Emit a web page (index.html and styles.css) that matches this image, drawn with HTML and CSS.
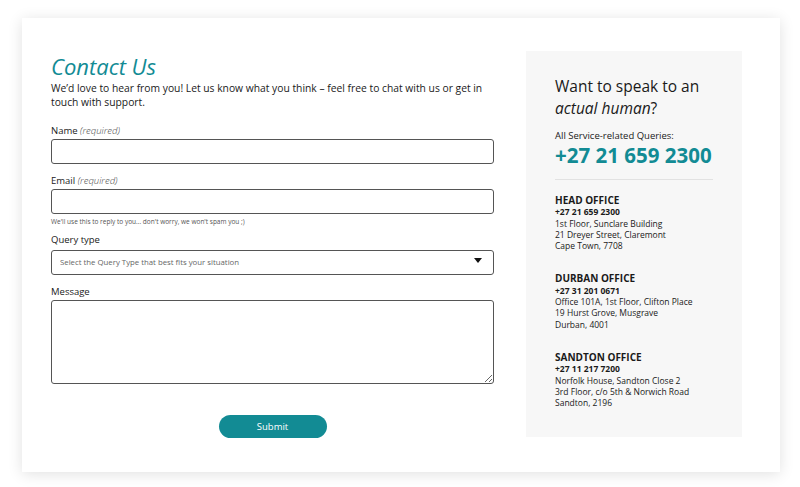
FILE: index.html
```html
<!DOCTYPE html>
<html lang="en">
<head>
  <meta charset="UTF-8" />
  <meta name="viewport" content="width=device-width, initial-scale=1.0"/>
  <title>Contact Us</title>
  <link rel="stylesheet" href="styles.css">
</head>
<body>
  <div class="card">
    <!-- Contact form -->
    <form class="contact-form" id="contactForm">
      <h1>Contact Us</h1>
      <p class="intro">We’d love to hear from you! Let us know what you think – feel free to chat with us or get in touch with support.</p>

      <label class="field">
        <span class="label">Name <em>(required)</em></span>
        <input type="text" required>
      </label>

      <label class="field">
        <span class="label">Email <em>(required)</em></span>
        <input type="email" required>
        <small>We'll use this to reply to you... don't worry, we won't spam you ;)</small>
      </label>

      <label class="field">
        <span class="label">Query type</span>
        <span class="select">
          <select>
            <option value="">Select the Query Type that best fits your situation</option>
            <option value="general">General</option>
            <option value="support">Support</option>
          </select>
          <svg class="caret" width="8" height="5" viewBox="0 0 8 5"><path d="M0 0h8L4 5z" fill="#111"/></svg>
        </span>
      </label>

      <label class="field">
        <span class="label">Message</span>
        <textarea rows="5"></textarea>
      </label>

      <div class="actions">
        <button type="submit">Submit</button>
      </div>
    </form>

    <!-- Offices -->
    <aside class="offices">
      <h2>Want to speak to an <em>actual human</em>?</h2>
      <p class="queries">All Service-related Queries:</p>
      <p class="main-phone">+27 21 659 2300</p>

      <div class="office">
        <h3>HEAD OFFICE</h3>
        <strong>+27 21 659 2300</strong>
        <p>1st Floor, Sunclare Building<br>21 Dreyer Street, Claremont<br>Cape Town, 7708</p>
      </div>

      <div class="office">
        <h3>DURBAN OFFICE</h3>
        <strong>+27 31 201 0671</strong>
        <p>Office 101A, 1st Floor, Clifton Place<br>19 Hurst Grove, Musgrave<br>Durban, 4001</p>
      </div>

      <div class="office">
        <h3>SANDTON OFFICE</h3>
        <strong>+27 11 217 7200</strong>
        <p>Norfolk House, Sandton Close 2<br>3rd Floor, c/o 5th &amp; Norwich Road<br>Sandton, 2196</p>
      </div>
    </aside>
  </div>

  <script>
    document.getElementById("contactForm").addEventListener("submit", function (e) {
      e.preventDefault();
    });
  </script>
</body>
</html>
```

FILE: styles.css
```css
:root {
  --primary-color: #128b94;
  --text-color: #1a1a1a;
  --muted-color: #666;
  --panel-bg: #f7f7f7;
  --font-sans: 'Open Sans', 'Noto Sans', Arial, sans-serif;
}

body {
  font-family: var(--font-sans);
  color: var(--text-color);
  background-color: #fff;
  margin: 0;
  padding: 18px 20px 15px 22px;
}

.card {
  width: 758px;
  height: 454px;
  box-sizing: border-box;
  padding: 34px 38px 35px 29px;
  background-color: #fff;
  box-shadow: 0 2px 14px rgba(0, 0, 0, 0.12);
  display: grid;
  grid-template-columns: 443px 216px;
  align-items: start;
  gap: 32px;
}

/* Form */

.contact-form {
  display: flex;
  flex-direction: column;
}

h1 {
  color: var(--primary-color);
  font-style: italic;
  font-weight: 400;
  font-size: 22px;
  line-height: 29px;
  margin: 0;
}

.intro {
  font-size: 10.3px;
  line-height: 14px;
  margin: 0 0 15px;
}

.field {
  display: flex;
  flex-direction: column;
  margin-bottom: 10px;
}

.label {
  font-size: 9.5px;
  line-height: 14px;
  margin-bottom: 1px;
}

.label em {
  font-weight: 300;
  color: #444;
}

input, select, textarea {
  font-family: var(--font-sans);
  box-sizing: border-box;
  border: 1px solid #555;
  border-radius: 3px;
  background-color: #fff;
  width: 100%;
  margin: 0;
}

input {
  height: 25px;
}

small {
  font-size: 6.5px;
  color: #555;
  line-height: 9px;
  margin-top: 3px;
  margin-bottom: -3px;
}

.select {
  position: relative;
  display: block;
}

select {
  appearance: none;
  height: 25px;
  padding: 0 8px;
  font-size: 7.8px;
  color: #666;
}

.caret {
  position: absolute;
  right: 12px;
  top: 10px;
}

textarea {
  height: 84px;
  resize: vertical;
}

.actions {
  display: flex;
  justify-content: center;
  margin-top: 21px;
}

button {
  font-family: var(--font-sans);
  background-color: var(--primary-color);
  color: #fff;
  font-size: 9.5px;
  width: 108px;
  height: 23px;
  border: none;
  border-radius: 12px;
  cursor: pointer;
}

/* Offices panel */

.offices {
  background-color: var(--panel-bg);
  padding: 24px 29px 22px;
  margin-top: -1px;
  height: 386px;
  box-sizing: border-box;
}

h2 {
  font-size: 15.5px;
  font-weight: 400;
  line-height: 22px;
  margin: 0 0 10px;
}

.queries {
  font-size: 9.5px;
  line-height: 13px;
  margin: 0;
}

.main-phone {
  color: var(--primary-color);
  font-size: 20.5px;
  font-weight: 700;
  line-height: 24px;
  white-space: nowrap;
  margin: 1px 0 15px;
  padding-bottom: 12px;
  border-bottom: 1px solid #e2e2e2;
}

.office {
  font-size: 8.5px;
  line-height: 11.3px;
  margin-bottom: 22px;
}

.office h3 {
  font-size: 10px;
  line-height: 11.3px;
  margin: 0;
}

.office strong {
  display: block;
}

.office p {
  margin: 0;
}
```
